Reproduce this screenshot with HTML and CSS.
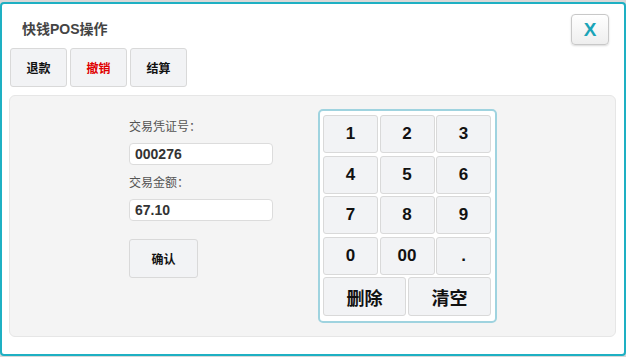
FILE: index.html
```html
<!DOCTYPE html>
<html lang="zh-CN">
  <head>
    <meta charset="UTF-8" />
    <meta name="viewport" content="width=device-width, initial-scale=1.0" />
    <title>快钱POS操作</title>
    <link rel="stylesheet" href="styles.css">
  </head>
  <body>
    <div class="dialog">
      <div class="header">
        <h1 class="title">快钱POS操作</h1>
        <button class="close">X</button>
      </div>

      <div class="tabs">
        <button class="tab">退款</button>
        <button class="tab active">撤销</button>
        <button class="tab">结算</button>
      </div>

      <div class="panel">
        <div class="form">
          <label class="label">交易凭证号：</label>
          <input class="field" type="text" value="000276">
          <label class="label second">交易金额：</label>
          <input class="field" type="text" value="67.10">
          <button class="confirm">确认</button>
        </div>

        <div class="keypad">
          <button class="key">1</button>
          <button class="key">2</button>
          <button class="key">3</button>
          <button class="key">4</button>
          <button class="key">5</button>
          <button class="key">6</button>
          <button class="key">7</button>
          <button class="key">8</button>
          <button class="key">9</button>
          <button class="key">0</button>
          <button class="key">00</button>
          <button class="key">.</button>
          <div class="bottomRow">
            <button class="key wide">删除</button>
            <button class="key wide">清空</button>
          </div>
        </div>
      </div>
    </div>
  </body>
</html>
```

FILE: styles.css
```css
* {
  margin: 0;
  padding: 0;
  box-sizing: border-box;
}
body {
  width: 626px;
  height: 357px;
  background-color: #d8d8d8;
  padding-top: 2px;
  font-family: "Liberation Sans", "Noto Sans CJK SC", sans-serif;
}
.dialog {
  width: 626px;
  height: 354px;
  background-color: #fff;
  border: 2px solid #1eb0c3;
  border-radius: 4px;
}
.header {
  display: flex;
  justify-content: space-between;
  align-items: flex-start;
  padding: 10px 15px 0 20px;
  height: 44px;
}
.title {
  font-size: 14px;
  font-weight: bold;
  color: #444;
  line-height: 20px;
  margin-top: 5px;
}
.close {
  width: 38px;
  height: 31px;
  border: 1px solid #c8c8c8;
  border-radius: 4px;
  background: linear-gradient(#ffffff, #eeeeee);
  box-shadow: 0 1px 2px rgba(0, 0, 0, 0.15);
  color: #1aa4b8;
  font-size: 19px;
  font-weight: bold;
  font-family: "Liberation Sans", sans-serif;
}
.tabs {
  display: flex;
  gap: 3px;
  padding-left: 8px;
}
.tab {
  width: 57px;
  height: 39px;
  background-color: #f2f3f5;
  border: 1px solid #d9d9d9;
  border-radius: 3px;
  font-family: "Noto Sans CJK SC", sans-serif;
  font-size: 12px;
  font-weight: bold;
  color: #111;
}
.tab.active {
  color: #e00000;
}
.panel {
  display: flex;
  margin: 8px 8px 0 7px;
  height: 242px;
  background-color: #f4f4f4;
  border: 1px solid #e6e6e6;
  border-radius: 6px;
  padding: 13px 0 0 119px;
}
.form {
  display: flex;
  flex-direction: column;
  align-items: flex-start;
  width: 144px;
  margin-top: 9px;
}
.label {
  font-family: "Noto Sans CJK SC", sans-serif;
  font-size: 12px;
  line-height: 16px;
  color: #555;
}
.label.second {
  margin-top: 9px;
}
.field {
  width: 144px;
  height: 22px;
  margin-top: 9px;
  border: 1px solid #dcdcdc;
  border-radius: 4px;
  background-color: #fff;
  padding-left: 5px;
  font-family: "Liberation Sans", sans-serif;
  font-size: 14px;
  font-weight: bold;
  color: #333;
}
.confirm {
  margin-top: 18px;
  width: 69px;
  height: 39px;
  background-color: #f2f3f5;
  border: 1px solid #d9d9d9;
  border-radius: 3px;
  font-family: "Noto Sans CJK SC", sans-serif;
  font-size: 12px;
  font-weight: bold;
  color: #111;
}
.keypad {
  display: grid;
  grid-template-columns: repeat(3, 55px);
  grid-auto-rows: 38px;
  gap: 2.5px 1.5px;
  align-content: start;
  margin-left: 45px;
  width: 179px;
  height: 214px;
  background-color: #fff;
  border: 2px solid #9fd3df;
  border-radius: 5px;
  padding: 4px 3px;
}
.key {
  background-color: #f2f3f5;
  border: 1px solid #d9d9d9;
  border-radius: 3px;
  font-family: "Liberation Sans", sans-serif;
  font-size: 17px;
  font-weight: bold;
  color: #111;
}
.bottomRow {
  grid-column: 1 / 4;
  display: grid;
  grid-template-columns: 1fr 1fr;
  gap: 2px;
  height: 39px;
}
.key.wide {
  font-family: "Noto Sans CJK SC", sans-serif;
  font-size: 18px;
}
```
